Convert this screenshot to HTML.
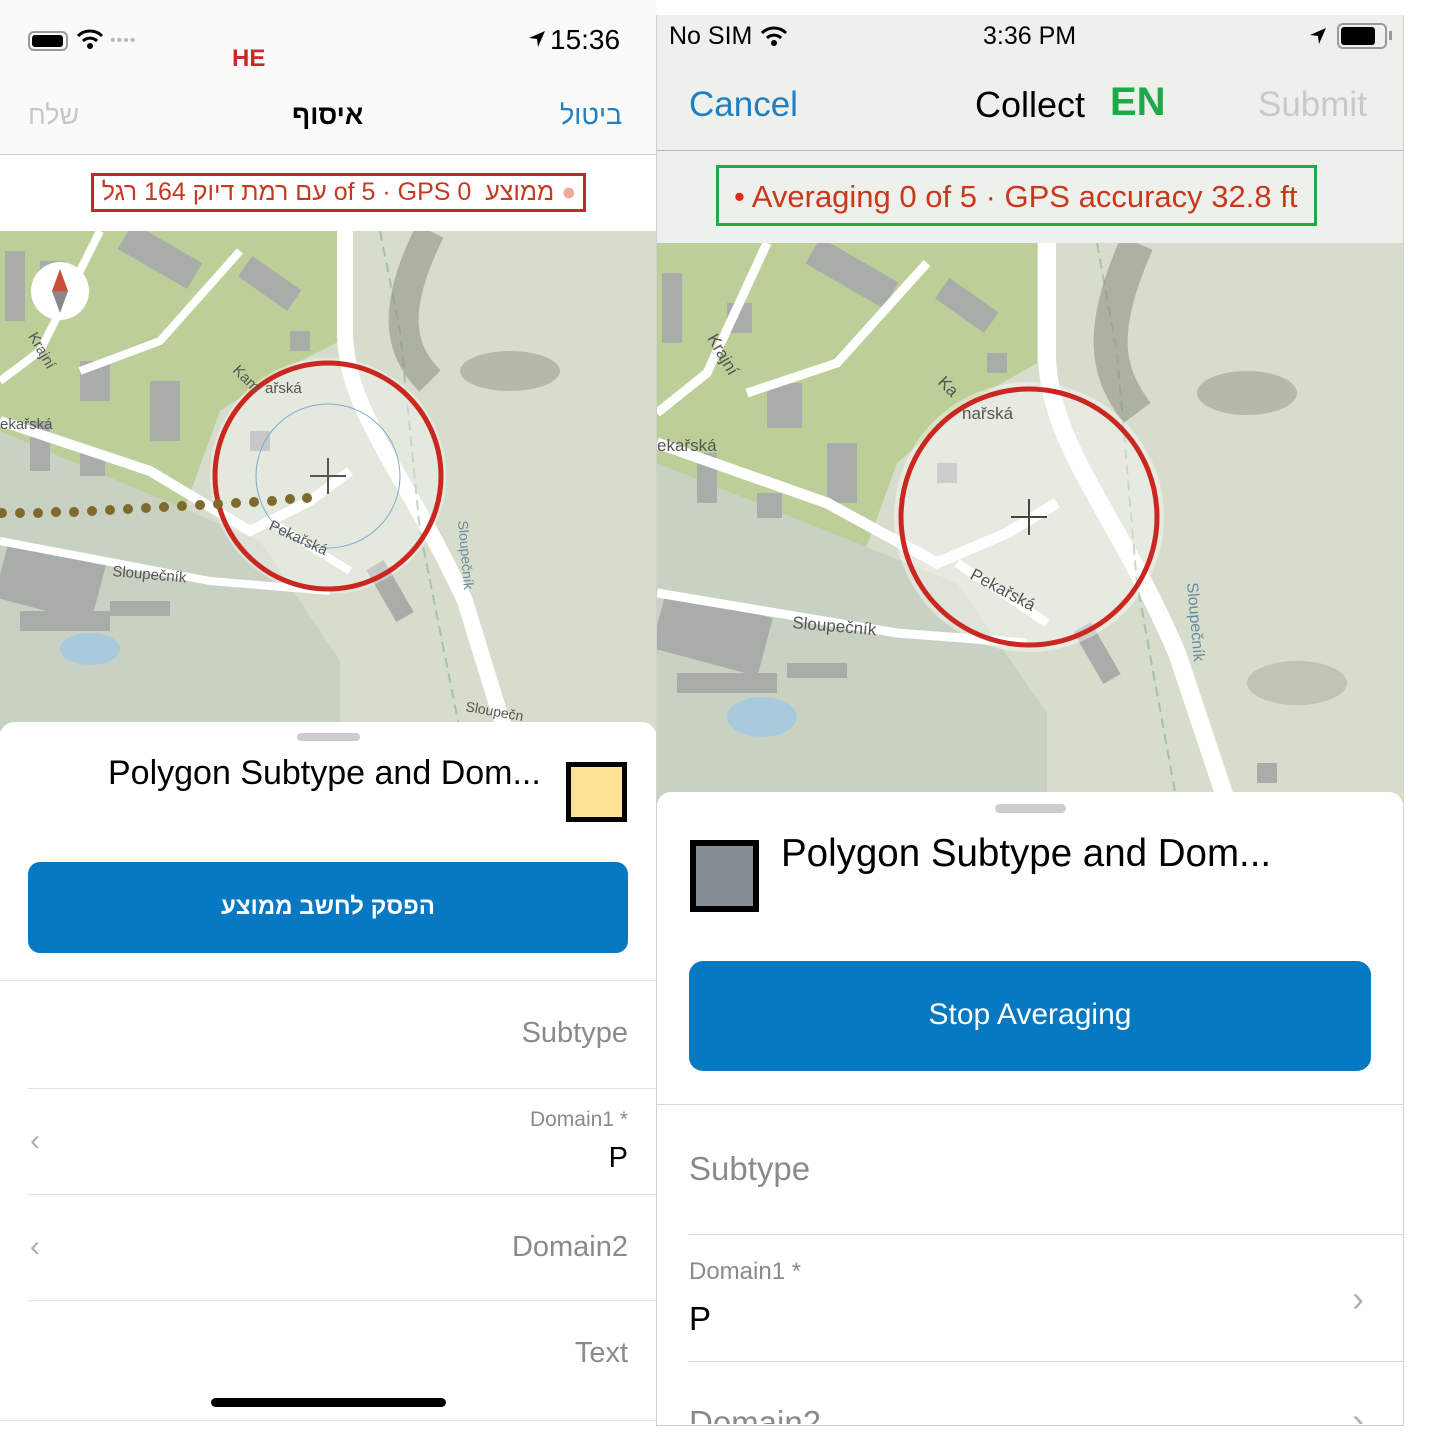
<!DOCTYPE html>
<html><head><meta charset="utf-8"><style>
*{margin:0;padding:0;box-sizing:border-box}
body{width:1431px;height:1440px;background:#fff;position:relative;overflow:hidden;font-family:"Liberation Sans","Noto Sans CJK JP",sans-serif}
.a{position:absolute}
.heb{font-family:"Liberation Sans","DejaVu Sans",sans-serif}
</style></head><body>

<!-- LEFT PANEL -->
<div class="a" style="left:0;top:0;width:656px;height:154px;background:#fafaf8"></div>
<div class="a" style="left:0;top:154px;width:656px;height:1px;background:#cfcfcf"></div>
<div class="a" style="left:0;top:155px;width:656px;height:76px;background:#fff"></div>
<div class="a" style="left:28px;top:31px;width:40px;height:20px;border:2px solid #999;border-radius:6px;"><div style="margin:2px;width:31px;height:12px;background:#000;border-radius:3px"></div></div>
<svg class="a" style="left:76px;top:28px" width="28" height="22" viewBox="0 0 28 22"><path d="M2 8a17 17 0 0 1 24 0" stroke="#000" stroke-width="3" fill="none"/><path d="M7 13a10 10 0 0 1 14 0" stroke="#000" stroke-width="3" fill="none"/><circle cx="14" cy="18" r="3" fill="#000"/></svg>
<div class="a" style="left:110px;top:32px;color:#bbb;font-size:16px;letter-spacing:1px">••••</div>
<div class="a" style="left:232px;top:45px;color:#d0262b;font-weight:bold;font-size:24px">HE</div>
<svg class="a" style="left:527px;top:29px" width="20" height="20" viewBox="0 0 20 20"><path d="M18 2L2 9l8 1 1 8z" fill="#000"/></svg>
<div class="a" style="left:550px;top:24px;font-size:28px;color:#000">15:36</div>
<div class="a heb" style="left:28px;top:100px;font-size:27px;color:#c7c7c7">שלח</div>
<div class="a heb" style="left:292px;top:100px;font-size:27px;color:#000;font-weight:bold">איסוף</div>
<div class="a heb" style="left:560px;top:100px;font-size:27px;color:#1e7fc2">ביטול</div>
<div class="a" style="left:91px;top:173px;width:495px;height:39px;border:3px solid #c2272d"></div>
<div class="a heb" dir="ltr" style="left:100px;top:178px;width:478px;font-size:25px;color:#c43a1e;white-space:nowrap;text-align:center"><span dir="rtl" style="display:inline-block">עם רמת דיוק 164 רגל</span> <span style="display:inline-block;unicode-bidi:isolate" dir="ltr">of 5 · GPS 0</span>&nbsp; <span dir="rtl" style="display:inline-block">ממוצע</span> <span style="color:#f2a8a0">●</span></div>

<!-- left map -->
<svg class="a" style="left:0;top:231px" width="656" height="500" viewBox="0 0 656 500">
<rect width="656" height="500" fill="#d6ddcd"/>
<path d="M0 0h340v110l-60 30-60 40-40 110-180 80H0z" fill="#bccf99"/>
<path d="M0 200l260 110 80 120 v70H0z" fill="#c9d2c2"/>
<g fill="#a8adaa">
<rect x="5" y="20" width="20" height="70"/><rect x="40" y="30" width="25" height="30"/><rect x="120" y="10" width="80" height="30" transform="rotate(30 160 25)"/>
<rect x="240" y="40" width="60" height="25" transform="rotate(35 270 52)"/><rect x="80" y="130" width="30" height="40"/><rect x="150" y="150" width="30" height="60"/>
<rect x="30" y="190" width="20" height="50"/><rect x="80" y="220" width="25" height="25"/><rect x="0" y="320" width="100" height="60" transform="rotate(15 50 350)"/>
<rect x="20" y="380" width="90" height="20"/><rect x="110" y="370" width="60" height="15"/><rect x="290" y="100" width="20" height="20"/>
<rect x="250" y="200" width="20" height="20"/><rect x="380" y="330" width="20" height="60" transform="rotate(-30 390 360)"/>
</g>
<path d="M345 0v100c0 80 60 140 120 270l40 130" stroke="#fff" stroke-width="16" fill="none"/>
<path d="M0 190l150 50 100 60 60-30 40-30" stroke="#fff" stroke-width="10" fill="none"/>
<path d="M100 0L40 120 0 150M240 20l-80 90-80 30M270 290l80 50M0 310l210 40 120 10" stroke="#fff" stroke-width="8" fill="none"/>
<path d="M380 0l20 100 20 200 40 200" stroke="#a7c0a8" stroke-width="2" stroke-dasharray="10 6" fill="none"/>
<path d="M430 0c-40 80-30 120 0 150" stroke="#8f9586" stroke-width="30" fill="none" opacity=".6"/>
<ellipse cx="510" cy="140" rx="50" ry="20" fill="#9ea194" opacity=".6"/>
<ellipse cx="90" cy="418" rx="30" ry="16" fill="#a9c9dd"/>
<circle cx="328" cy="245" r="118" fill="#fff" opacity=".35"/>
<circle cx="328" cy="245" r="113" fill="none" stroke="#c9271f" stroke-width="5"/>
<circle cx="328" cy="245" r="72" fill="none" stroke="#7eaad2" stroke-width="1"/>
<path d="M310 245h36M328 227v36" stroke="#555" stroke-width="2"/>
<g fill="#7e6a2c"><circle cx="2" cy="282" r="5"/><circle cx="20" cy="282" r="5"/><circle cx="38" cy="282" r="5"/><circle cx="56" cy="281" r="5"/><circle cx="74" cy="281" r="5"/><circle cx="92" cy="280" r="5"/><circle cx="110" cy="279" r="5"/><circle cx="128" cy="278" r="5"/><circle cx="146" cy="277" r="5"/><circle cx="164" cy="276" r="5"/><circle cx="182" cy="275" r="5"/><circle cx="200" cy="274" r="5"/><circle cx="218" cy="273" r="5"/><circle cx="236" cy="272" r="5"/><circle cx="254" cy="271" r="5"/><circle cx="272" cy="270" r="5"/><circle cx="290" cy="268" r="5"/><circle cx="307" cy="267" r="5"/></g>
<text x="112" y="345" font-size="15" fill="#555" transform="rotate(5 112 345)">Sloupečník</text>
<text x="268" y="298" font-size="15" fill="#555" transform="rotate(25 268 298)">Pekařská</text>
<text x="0" y="198" font-size="15" fill="#555">ekařská</text>
<text x="28" y="105" font-size="15" fill="#555" transform="rotate(60 28 105)">Krajní</text>
<text x="232" y="140" font-size="15" fill="#555" transform="rotate(45 232 140)">Kam</text>
<text x="265" y="162" font-size="15" fill="#555">ařská</text>
<text x="458" y="290" font-size="14" fill="#6a8aa0" transform="rotate(85 458 290)">Sloupečník</text>
<text x="465" y="480" font-size="14" fill="#555" transform="rotate(10 465 480)">Sloupečn</text>
<circle cx="60" cy="60" r="29" fill="#fff"/>
<path d="M60 38l-8 22h16z" fill="#c8503a"/><path d="M60 82l-8-22h16z" fill="#888"/>
</svg>

<!-- left sheet -->
<div class="a" style="left:0;top:722px;width:656px;height:718px;background:#fff;border-radius:14px 14px 0 0"></div>
<div class="a" style="left:297px;top:733px;width:63px;height:8px;border-radius:4px;background:#cdcdcd"></div>
<div class="a" style="left:108px;top:754px;font-size:34px;color:#000;white-space:nowrap">Polygon Subtype and Dom...</div>
<div class="a" style="left:566px;top:762px;width:61px;height:60px;border:5px solid #000;background:#fde296"></div>
<div class="a" style="left:28px;top:862px;width:600px;height:91px;background:#0779c3;border-radius:12px"></div>
<div class="a heb" style="left:28px;top:893px;width:600px;text-align:center;color:#fff;font-size:24px;font-weight:bold">הפסק לחשב ממוצע</div>
<div class="a" style="left:0;top:980px;width:656px;height:1px;background:#e2e2e2"></div>
<div class="a" style="right:803px;top:1017px;font-size:29px;color:#8a8a8a">Subtype</div>
<div class="a" style="left:28px;top:1088px;width:628px;height:1px;background:#e2e2e2"></div>
<div class="a" style="right:803px;top:1108px;font-size:21px;color:#8a8a8a">Domain1 *</div>
<div class="a" style="right:803px;top:1142px;font-size:29px;color:#000">P</div>
<div class="a" style="left:30px;top:1124px;font-size:30px;color:#b0b0b0">‹</div>
<div class="a" style="left:28px;top:1194px;width:628px;height:1px;background:#e2e2e2"></div>
<div class="a" style="right:803px;top:1231px;font-size:29px;color:#8a8a8a">Domain2</div>
<div class="a" style="left:30px;top:1230px;font-size:30px;color:#b0b0b0">‹</div>
<div class="a" style="left:28px;top:1300px;width:628px;height:1px;background:#e2e2e2"></div>
<div class="a" style="right:803px;top:1337px;font-size:29px;color:#8a8a8a">Text</div>
<div class="a" style="left:211px;top:1398px;width:235px;height:9px;border-radius:5px;background:#000"></div>
<div class="a" style="left:0;top:1420px;width:656px;height:1px;background:#e2e2e2"></div>

<!-- RIGHT PANEL -->
<div class="a" style="left:656px;top:15px;width:748px;height:1411px;border:1px solid #d0d0d0;background:#fff"></div>
<div class="a" style="left:657px;top:15px;width:746px;height:135px;background:#eef0eb"></div>
<div class="a" style="left:657px;top:150px;width:746px;height:1px;background:#b8b8b8"></div>
<div class="a" style="left:657px;top:151px;width:746px;height:92px;background:#eef0eb"></div>
<div class="a" style="left:669px;top:22px;font-size:25px;color:#000">No SIM</div>
<svg class="a" style="left:760px;top:25px" width="28" height="22" viewBox="0 0 28 22"><path d="M2 8a17 17 0 0 1 24 0" stroke="#000" stroke-width="3" fill="none"/><path d="M7 13a10 10 0 0 1 14 0" stroke="#000" stroke-width="3" fill="none"/><circle cx="14" cy="18" r="3" fill="#000"/></svg>
<div class="a" style="left:983px;top:22px;font-size:25px;color:#000">3:36 PM</div>
<svg class="a" style="left:1308px;top:26px" width="20" height="20" viewBox="0 0 20 20"><path d="M18 2L2 9l8 1 1 8z" fill="#000"/></svg>
<div class="a" style="left:1337px;top:23px;width:50px;height:26px;border:2px solid #999;border-radius:6px"><div style="margin:2px;width:34px;height:18px;background:#000;border-radius:3px"></div></div>
<div class="a" style="left:1389px;top:31px;width:3px;height:9px;background:#999"></div>
<div class="a" style="left:689px;top:85px;font-size:35px;color:#1e7fc2">Cancel</div>
<div class="a" style="left:975px;top:84px;font-size:36px;color:#000">Collect</div>
<div class="a" style="left:1110px;top:80px;font-size:40px;color:#1ea94a;font-weight:bold">EN</div>
<div class="a" style="left:1258px;top:85px;font-size:35px;color:#c9c9c9">Submit</div>
<div class="a" style="left:716px;top:165px;width:601px;height:61px;border:3px solid #22a94a"></div>
<div class="a" style="left:734px;top:179px;font-size:31px;color:#c9381b;white-space:nowrap"><span style="color:#e5281b">•</span> Averaging 0 of 5 · GPS accuracy 32.8 ft</div>

<!-- right map -->
<svg class="a" style="left:657px;top:243px" width="746" height="560" viewBox="0 0 746 560">
<rect width="746" height="560" fill="#d6ddcd"/>
<path d="M0 0h380v120l-70 40-70 60-40 110-200 60H0z" fill="#bccf99"/>
<path d="M0 220l300 120 90 130v90H0z" fill="#c9d2c2"/>
<g fill="#a8adaa">
<rect x="5" y="30" width="20" height="70"/><rect x="70" y="60" width="25" height="30"/><rect x="150" y="15" width="90" height="30" transform="rotate(30 195 30)"/>
<rect x="280" y="50" width="60" height="25" transform="rotate(35 310 62)"/><rect x="110" y="140" width="35" height="45"/><rect x="170" y="200" width="30" height="60"/>
<rect x="40" y="210" width="20" height="50"/><rect x="100" y="250" width="25" height="25"/><rect x="0" y="360" width="110" height="60" transform="rotate(15 55 390)"/>
<rect x="20" y="430" width="100" height="20"/><rect x="130" y="420" width="60" height="15"/><rect x="330" y="110" width="20" height="20"/>
<rect x="280" y="220" width="20" height="20"/><rect x="430" y="380" width="20" height="60" transform="rotate(-30 440 410)"/><rect x="600" y="520" width="20" height="20"/>
</g>
<path d="M390 0v110c0 90 70 160 130 300l50 150" stroke="#fff" stroke-width="18" fill="none"/>
<path d="M0 200l170 60 110 60 70-30 50-30" stroke="#fff" stroke-width="11" fill="none"/>
<path d="M110 0L50 130 0 170M270 20l-90 100-90 30M300 320l90 60M0 350l240 40 130 10" stroke="#fff" stroke-width="9" fill="none"/>
<path d="M440 0l20 110 20 230 40 220" stroke="#a7c0a8" stroke-width="2" stroke-dasharray="10 6" fill="none"/>
<path d="M480 0c-40 90-30 130 0 170" stroke="#8f9586" stroke-width="34" fill="none" opacity=".6"/>
<ellipse cx="590" cy="150" rx="50" ry="22" fill="#9ea194" opacity=".6"/>
<ellipse cx="640" cy="440" rx="50" ry="22" fill="#a7ab9d" opacity=".5"/>
<ellipse cx="105" cy="474" rx="35" ry="20" fill="#a9c9dd"/>
<circle cx="372" cy="274" r="135" fill="#fff" opacity=".4"/>
<circle cx="372" cy="274" r="128" fill="none" stroke="#c9271f" stroke-width="5"/>
<path d="M354 274h36M372 256v36" stroke="#444" stroke-width="2"/>
<text x="135" y="385" font-size="17" fill="#555" transform="rotate(5 135 385)">Sloupečník</text>
<text x="312" y="335" font-size="17" fill="#555" transform="rotate(28 312 335)">Pekařská</text>
<text x="0" y="208" font-size="17" fill="#555">ekařská</text>
<text x="50" y="95" font-size="17" fill="#555" transform="rotate(60 50 95)">Krajní</text>
<text x="280" y="140" font-size="17" fill="#555" transform="rotate(45 280 140)">Ka</text>
<text x="305" y="176" font-size="17" fill="#555">nařská</text>
<text x="530" y="340" font-size="16" fill="#6a8aa0" transform="rotate(85 530 340)">Sloupečník</text>
</svg>

<!-- right sheet -->
<div class="a" style="left:657px;top:792px;width:746px;height:633px;background:#fff;border-radius:14px 14px 0 0"></div>
<div class="a" style="left:995px;top:804px;width:71px;height:9px;border-radius:5px;background:#cdcdcd"></div>
<div class="a" style="left:690px;top:840px;width:69px;height:72px;border:6px solid #000;background:#858d93"></div>
<div class="a" style="left:781px;top:832px;font-size:38.5px;color:#000;white-space:nowrap">Polygon Subtype and Dom...</div>
<div class="a" style="left:689px;top:961px;width:682px;height:110px;background:#0779c3;border-radius:14px"></div>
<div class="a" style="left:689px;top:998px;width:682px;text-align:center;color:#fff;font-size:30px">Stop Averaging</div>
<div class="a" style="left:657px;top:1104px;width:746px;height:1px;background:#d9d9d9"></div>
<div class="a" style="left:689px;top:1150px;font-size:33px;color:#8a8a8a">Subtype</div>
<div class="a" style="left:689px;top:1234px;width:714px;height:1px;background:#d9d9d9"></div>
<div class="a" style="left:689px;top:1258px;font-size:24px;color:#8a8a8a">Domain1 *</div>
<div class="a" style="left:689px;top:1300px;font-size:33px;color:#000">P</div>
<div class="a" style="left:1352px;top:1278px;font-size:36px;color:#b0b0b0">›</div>
<div class="a" style="left:689px;top:1361px;width:714px;height:1px;background:#d9d9d9"></div>
<div class="a" style="left:657px;top:1362px;width:746px;height:62px;overflow:hidden"><div style="position:absolute;left:32px;top:42px;font-size:33px;color:#8a8a8a">Domain2</div><div style="position:absolute;left:695px;top:38px;font-size:36px;color:#b0b0b0">›</div></div>
</body></html>
